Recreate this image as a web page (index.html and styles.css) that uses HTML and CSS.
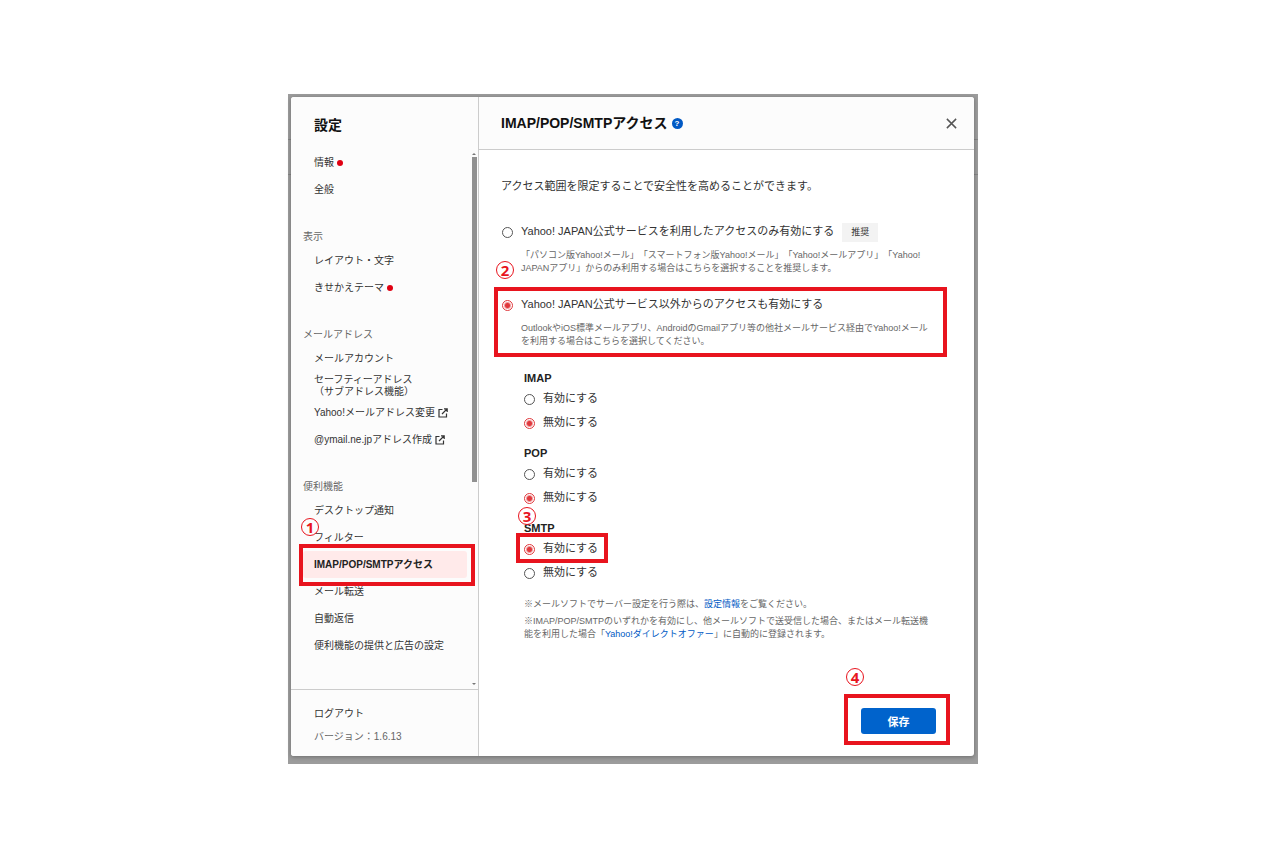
FILE: index.html
```html
<!DOCTYPE html>
<html lang="ja">
<head>
    <meta charset="utf-8">
    <meta name="viewport" content="width=device-width, initial-scale=1">
    <title>設定 - IMAP/POP/SMTPアクセス</title>
    <link rel="stylesheet" href="styles.css">
</head>
<body>
    <div class="backdrop">
        <div class="dialog">
            <aside class="sidebar">
                <h1 class="sidebar-title">設定</h1>
                <div class="scroller">
                    <nav class="menu">
                        <ul>
                            <li><a href="#">情報<span class="dot"></span></a></li>
                            <li><a href="#">全般</a></li>
                        </ul>
                        <h2>表示</h2>
                        <ul>
                            <li><a href="#">レイアウト・文字</a></li>
                            <li><a href="#">きせかえテーマ<span class="dot"></span></a></li>
                        </ul>
                        <h2>メールアドレス</h2>
                        <ul>
                            <li><a href="#">メールアカウント</a></li>
                            <li><a href="#">セーフティーアドレス<br>（サブアドレス機能）</a></li>
                            <li><a href="#">Yahoo!メールアドレス変更<svg class="external" viewBox="0 0 10 10"><path d="M4.5 1.5H1v7.5h7.5V5.5M6 .8h3.2V4M9 1L4 6"/></svg></a></li>
                            <li><a href="#">@ymail.ne.jpアドレス作成<svg class="external" viewBox="0 0 10 10"><path d="M4.5 1.5H1v7.5h7.5V5.5M6 .8h3.2V4M9 1L4 6"/></svg></a></li>
                        </ul>
                        <h2>便利機能</h2>
                        <ul>
                            <li><a href="#">デスクトップ通知</a></li>
                            <li><a href="#">フィルター</a></li>
                            <li class="marked">
                                <a href="#" class="active">IMAP/POP/SMTPアクセス</a>
                                <div class="mark mark-menu"><span class="step">1</span></div>
                            </li>
                            <li><a href="#">メール転送</a></li>
                            <li><a href="#">自動返信</a></li>
                            <li><a href="#">便利機能の提供と広告の設定</a></li>
                        </ul>
                        <h2>セキュリティ設定</h2>
                    </nav>
                    <div class="scrollbar">
                        <span class="arrow-up"></span>
                        <div class="track"><div class="thumb"></div></div>
                        <span class="arrow-down"></span>
                    </div>
                </div>
                <div class="sidebar-footer">
                    <a href="#">ログアウト</a>
                    <p>バージョン：1.6.13</p>
                </div>
            </aside>

            <main class="main">
                <header class="main-header">
                    <h2>IMAP/POP/SMTPアクセス</h2>
                    <button type="button" class="help" aria-label="ヘルプ">?</button>
                    <button type="button" class="close" aria-label="閉じる">
                        <svg viewBox="0 0 10 10"><path d="M.8.8l8.4 8.4M9.2.8L.8 9.2"/></svg>
                    </button>
                </header>

                <form class="content">
                    <p class="lead">アクセス範囲を限定することで安全性を高めることができます。</p>

                    <div class="option">
                        <div class="option-head">
                            <input type="radio" name="access" id="official">
                            <label for="official">Yahoo! JAPAN公式サービスを利用したアクセスのみ有効にする</label>
                            <span class="badge">推奨</span>
                        </div>
                        <p class="option-note">「パソコン版Yahoo!メール」「スマートフォン版Yahoo!メール」「Yahoo!メールアプリ」「Yahoo! JAPANアプリ」からのみ利用する場合はこちらを選択することを推奨します。</p>
                    </div>

                    <div class="option marked">
                        <div class="option-head">
                            <input type="radio" name="access" id="others" checked>
                            <label for="others">Yahoo! JAPAN公式サービス以外からのアクセスも有効にする</label>
                        </div>
                        <p class="option-note">OutlookやiOS標準メールアプリ、AndroidのGmailアプリ等の他社メールサービス経由でYahoo!メールを利用する場合はこちらを選択してください。</p>
                        <div class="mark mark-option"><span class="step">2</span></div>
                    </div>

                    <div class="protocols">
                        <fieldset>
                            <legend>IMAP</legend>
                            <div class="radio-row"><input type="radio" name="imap" id="imap-on"><label for="imap-on">有効にする</label></div>
                            <div class="radio-row"><input type="radio" name="imap" id="imap-off" checked><label for="imap-off">無効にする</label></div>
                        </fieldset>
                        <fieldset>
                            <legend>POP</legend>
                            <div class="radio-row"><input type="radio" name="pop" id="pop-on"><label for="pop-on">有効にする</label></div>
                            <div class="radio-row"><input type="radio" name="pop" id="pop-off" checked><label for="pop-off">無効にする</label></div>
                        </fieldset>
                        <fieldset>
                            <legend>SMTP</legend>
                            <div class="radio-row marked"><input type="radio" name="smtp" id="smtp-on" checked><label for="smtp-on">有効にする</label><div class="mark mark-radio"><span class="step">3</span></div></div>
                            <div class="radio-row"><input type="radio" name="smtp" id="smtp-off"><label for="smtp-off">無効にする</label></div>
                        </fieldset>

                        <div class="notes">
                            <p>※メールソフトでサーバー設定を行う際は、<a href="#">設定情報</a>をご覧ください。</p>
                            <p>※IMAP/POP/SMTPのいずれかを有効にし、他メールソフトで送受信した場合、またはメール転送機能を利用した場合「<a href="#">Yahoo!ダイレクトオファー</a>」に自動的に登録されます。</p>
                        </div>
                    </div>

                    <div class="actions marked">
                        <button type="submit" class="save">保存</button>
                        <div class="mark mark-save"><span class="step">4</span></div>
                    </div>
                </form>
            </main>
        </div>
    </div>
</body>
</html>
```
FILE: styles.css
```css
*{
    margin: 0;
    padding: 0;
    box-sizing: border-box;
}
body{
    display: flex;
    align-items: center;
    justify-content: center;
    min-height: 100vh;
    background: #fff;
    color: #333;
    font-family: "Liberation Sans", "Noto Sans CJK JP", sans-serif;
    font-size: 10px;
    text-spacing-trim: space-all;
}
ul{
    list-style: none;
}
a{
    color: inherit;
    text-decoration: none;
}
button{
    border: 0;
    font-family: inherit;
    cursor: pointer;
}

/* dialog */
.backdrop{
    width: 100%;
    max-width: 690px;
    padding: 3px 4px 8px 3px;
    background-color: #9c9c9c;
    background-image: linear-gradient(#858585, #858585), linear-gradient(#858585, #858585);
    background-size: 100% 1px;
    background-position: 0 45px, 0 80px;
    background-repeat: no-repeat;
}
.dialog{
    display: grid;
    grid-template-columns: 188px 1fr;
    background: #fff;
    border-radius: 3px;
    box-shadow: 0 1px 4px rgba(0, 0, 0, 0.3);
}

/* sidebar */
.sidebar{
    display: flex;
    flex-direction: column;
    background: #fcfcfc;
    border-right: 1px solid #ccc;
    border-radius: 3px 0 0 3px;
}
.sidebar-title{
    padding: 18px 23px 14px;
    font-size: 14px;
    line-height: 20px;
    color: #111;
}
.scroller{
    display: flex;
    flex: 1 1 0px;
    min-height: 0;
    gap: 4px;
    padding: 0 1px 0 12px;
    overflow: hidden;
}
.menu{
    flex: 1;
}
.menu h2{
    margin-top: 24px;
    font-size: 10px;
    font-weight: normal;
    line-height: 20px;
    color: #666;
}
.menu h2:last-child{
    margin-top: 26px;
}
.menu a{
    display: flex;
    align-items: center;
    height: 27px;
    padding-left: 11px;
    line-height: 12px;
    white-space: nowrap;
}
.menu a.active{
    background: #ffeaea;
    border-radius: 3px;
    font-weight: bold;
    color: #222;
}
.dot{
    width: 6px;
    height: 6px;
    margin-left: 3px;
    border-radius: 50%;
    background: #e00012;
}
.external{
    width: 10px;
    height: 10px;
    margin-left: 3px;
    fill: none;
    stroke: #333;
    stroke-width: 1.2;
}
.scrollbar{
    display: flex;
    flex-direction: column;
    align-items: center;
    gap: 2px;
    width: 6px;
    padding: 4px 0;
}
.track{
    flex: 1;
    width: 5px;
}
.thumb{
    height: 62%;
    background: #919191;
}
.arrow-up,
.arrow-down{
    border: 2px solid transparent;
}
.arrow-up{
    border-top: 0;
    border-bottom-color: #777;
}
.arrow-down{
    border-bottom: 0;
    border-top-color: #777;
}
.sidebar-footer{
    padding: 14px 23px 9px;
    border-top: 1px solid #ccc;
    line-height: 20px;
}
.sidebar-footer a{
    display: block;
}
.sidebar-footer p{
    margin-top: 3px;
    color: #666;
}

/* main */
.main-header{
    display: flex;
    align-items: center;
    height: 53px;
    padding: 0 17px 0 22px;
    background: #fcfcfc;
    border-bottom: 1px solid #ccc;
    border-radius: 0 3px 0 0;
}
.main-header h2{
    font-size: 14px;
    line-height: 20px;
    color: #111;
}
.help{
    width: 11px;
    height: 11px;
    margin-left: 4px;
    border-radius: 50%;
    background: #0059c4;
    color: #fff;
    font-size: 8px;
    font-weight: bold;
    line-height: 11px;
}
.close{
    display: flex;
    margin-left: auto;
    background: none;
}
.close svg{
    width: 11px;
    height: 11px;
    fill: none;
    stroke: #555;
    stroke-width: 1.3;
}
.content{
    padding: 28px 38px 22px 22px;
}
.lead{
    font-size: 11px;
    line-height: 16px;
}
.option{
    margin: 20px 0 0 1px;
}
.lead + .option{
    margin-top: 28px;
}
.option-head{
    display: flex;
    align-items: center;
    gap: 8px;
    height: 20px;
    font-size: 11px;
    line-height: 18px;
    white-space: nowrap;
}
.option-head label,
.radio-row label{
    padding-bottom: 2px;
}
.badge{
    padding: 0 9px;
    background: #f3f3f3;
    font-size: 9px;
    line-height: 19px;
}
.option-note{
    margin: 7px 4px 0 19px;
    font-size: 9px;
    line-height: 13px;
    color: #666;
}
input[type="radio"]{
    flex: none;
    width: 11px;
    height: 11px;
    appearance: none;
    border: 1px solid #555;
    border-radius: 50%;
    background: #fff;
}
input[type="radio"]:checked{
    border-color: #e0383c;
    background: radial-gradient(circle, #e0383c 2px, #fff 4px);
}
.protocols{
    padding: 23px 0 0 23px;
}
fieldset{
    margin-bottom: 11px;
    border: 0;
}
legend{
    margin-bottom: 2px;
    font-size: 11px;
    font-weight: bold;
    line-height: 14px;
    color: #222;
}
.radio-row{
    display: flex;
    align-items: center;
    gap: 8px;
    width: max-content;
    height: 24px;
    font-size: 11px;
    line-height: 18px;
}
.notes{
    padding-top: 2px;
    font-size: 9px;
    line-height: 13px;
    color: #666;
}
.notes p + p{
    margin-top: 4px;
}
.notes a{
    color: #0059c4;
}
.actions{
    width: max-content;
    margin: 67px 0 0 auto;
}
.save{
    display: block;
    width: 75px;
    height: 26px;
    border-radius: 3px;
    background: #0063cc;
    color: #fff;
    font-size: 11px;
    font-weight: bold;
}

/* red frames with step numbers */
.marked{
    position: relative;
}
.mark{
    position: absolute;
    border: 4px solid #e8141e;
    pointer-events: none;
}
.mark-menu{
    inset: -7px -8px -8px -4px;
}
.mark-option{
    inset: -8px -11px -9px -8px;
}
.mark-radio{
    inset: -4px -10px -2px -8px;
}
.mark-save{
    inset: -14px -14px -11px -17px;
}
.step{
    position: absolute;
    top: -30px;
    left: -2px;
    width: 18px;
    height: 18px;
    border: 1px solid #e8141e;
    border-radius: 50%;
    color: #e8141e;
    font-family: "Noto Sans", sans-serif;
    font-size: 15px;
    font-weight: bold;
    line-height: 16px;
    text-align: center;
}
```
